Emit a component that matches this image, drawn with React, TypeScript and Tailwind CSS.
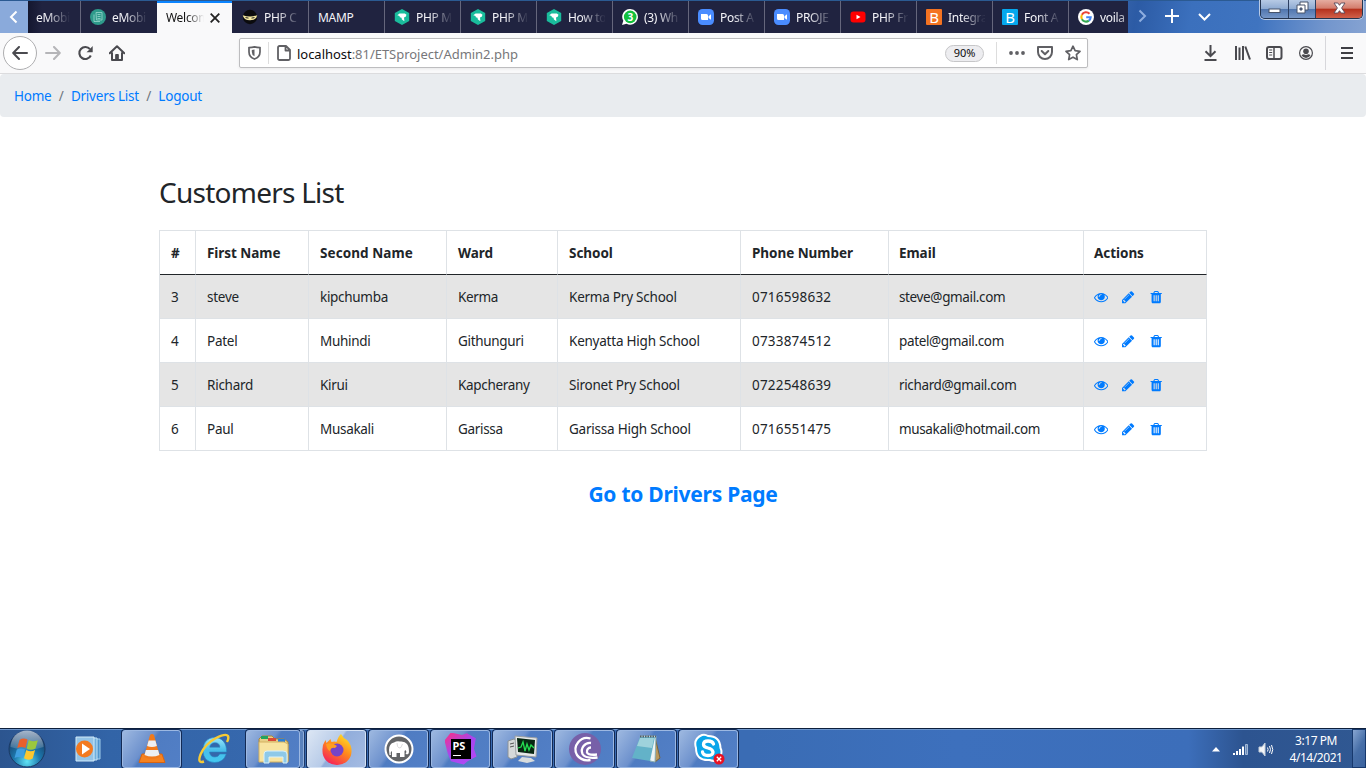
import React from "react";

const GlobeDoc = () => (
  <svg className="shrink-0" width="16" height="16" viewBox="0 0 16 16">
    <circle cx="8" cy="8" r="8" fill="#2e9a8b" />
    <path d="M6 3.500h6v7.500h-5.500zM4 5.500v7h6M7.500 5.500h3M7.500 7.500h3M7.500 9.500h3" fill="none" stroke="#8fd0c6" strokeWidth="0.900" />
  </svg>
);
const NinjaIcon = () => (
  <svg className="shrink-0" width="16" height="16" viewBox="0 0 16 16">
    <circle cx="8" cy="8" r="7.200" fill="#0b0b0d" />
    <path d="M.8 6.200Q8 8.800 15.200 6.200Q14.500 11.300 8 11.300Q1.500 11.300.8 6.200z" fill="#f3e7a0" />
    <path d="M3.500 8.600l3 .5M12.500 8.600l-3 .5" stroke="#222" strokeWidth="1" />
  </svg>
);
const HexIcon = () => (
  <svg className="shrink-0" width="16" height="16" viewBox="0 0 16 16">
    <path d="M8 0l7.200 4v8L8 16 .8 12V4z" fill="#1abc9c" />
    <path d="M3.300 6.300L5.600 4.600h5.200l1.700 1.100-.8 2.100-1.700.700.400 3.700-2.500-1.600-.4-1.800-1.700-.6-.3-1.200z" fill="#fff" />
  </svg>
);
const WhatsIcon = () => (
  <svg className="shrink-0" width="16" height="16" viewBox="0 0 16 16">
    <path d="M8.200 0a7.800 7.800 0 1 1-3.700 14.700L0 16l1.300-4.300A7.800 7.800 0 0 1 8.200 0z" fill="#fff" />
    <circle cx="8.200" cy="7.900" r="6.300" fill="#12c03d" />
    <text x="8.200" y="11.600" textAnchor="middle" fontSize="10" fontWeight="700" fill="#fff" fontFamily="Open Sans, sans-serif">3</text>
  </svg>
);
const ZoomIcon = () => (
  <svg className="shrink-0" width="16" height="16" viewBox="0 0 16 16">
    <rect width="16" height="16" rx="4.500" fill="#4a8cff" />
    <path d="M3 5h5.500a1.500 1.500 0 0 1 1.500 1.500V11H4.500A1.500 1.500 0 0 1 3 9.500zM10.500 7.200L13 5.300v5.400l-2.500-1.800z" fill="#fff" />
  </svg>
);
const YouTubeIcon = () => (
  <svg className="shrink-0" width="16" height="16" viewBox="0 0 16 16">
    <rect y="2.500" x="0.500" width="15" height="11" rx="3" fill="#f00" />
    <path d="M6.500 5.700v4.600l4-2.300z" fill="#fff" />
  </svg>
);
const GoogleIcon = () => (
  <svg className="shrink-0" width="16" height="16" viewBox="0 0 16 16">
    <circle cx="8" cy="8" r="8" fill="#fff" />
    <g fill="none" strokeWidth="2.100">
      <path d="M11.500 4.700A4.700 4.700 0 0 0 3.900 5.800" stroke="#ea4335" />
      <path d="M3.900 5.800a4.700 4.700 0 0 0 0 4.400" stroke="#fbbc05" />
      <path d="M3.900 10.200a4.700 4.700 0 0 0 7 1.400" stroke="#34a853" />
      <path d="M10.900 11.600A4.700 4.700 0 0 0 12.700 8.200H8.200" stroke="#4285f4" />
    </g>
  </svg>
);
const BOrange = () => <span className="flex h-4 w-4 shrink-0 items-center justify-center rounded-[1px] bg-[#f47321] text-[15px] leading-4 text-white">B</span>;
const BBlue = () => <span className="flex h-4 w-4 shrink-0 items-center justify-center rounded-[1px] bg-[#05a8ee] text-[15px] leading-4 text-white">B</span>;

type TabData = { label: string; icon?: React.ReactNode };
const tabs: TabData[] = [
  { label: "PHP C", icon: <NinjaIcon /> },
  { label: "MAMP" },
  { label: "PHP M", icon: <HexIcon /> },
  { label: "PHP M", icon: <HexIcon /> },
  { label: "How to", icon: <HexIcon /> },
  { label: "(3) Wh", icon: <WhatsIcon /> },
  { label: "Post A", icon: <ZoomIcon /> },
  { label: "PROJE", icon: <ZoomIcon /> },
  { label: "PHP Fr", icon: <YouTubeIcon /> },
  { label: "Integra", icon: <BOrange /> },
  { label: "Font A", icon: <BBlue /> },
];

const fade = "min-w-0 flex-1 overflow-hidden pt-px whitespace-nowrap [mask-image:linear-gradient(to_right,black_calc(100%-24px),#0001_calc(100%-2px))]";

function TabStrip() {
  return (
    <div className="flex h-[33px] shrink-0 border-t border-[#2b5a92] bg-[linear-gradient(100deg,#8aaadb_0%,#8aaadb_70%,#2c5ba5_83%,#3b70bd_87%,#3f74c0_92%,#7396cd_97%,#86a3d2_100%)] text-[12px] tracking-[-0.300px] text-[#f4f4f8]">
      <div className="flex w-7 items-center justify-center">
        <svg width="10" height="14" viewBox="0 0 10 14" fill="none" stroke="#fff" strokeWidth="2"><path d="M7.500 1.500L2 7l5.500 5.500" /></svg>
      </div>
      <div className="flex w-[53px] items-center border-r border-[#65667c] bg-[#202340] bg-[linear-gradient(90deg,#14172f,#202340_14px)] pr-2.5 pl-2">
        <span className={fade}>eMobi</span>
      </div>
      <div className="flex w-[76px] items-center gap-[6px] bg-[#202340] pr-[9px] pl-[9px]">
        <GlobeDoc />
        <span className={fade}>eMobi</span>
      </div>
      <div className="flex w-[75px] items-center border-t-2 border-[#0a84ff] bg-[#f9f9fa] pb-px pl-[9px] text-[#111]">
        <span className="w-[38px] overflow-hidden whitespace-nowrap [mask-image:linear-gradient(to_right,black_20px,transparent)]">Welcom</span>
        <svg className="ml-[6px]" width="10" height="10" viewBox="0 0 10 10" stroke="#222" strokeWidth="1.800"><path d="M.7.700l8.600 8.600M9.300.700L.7 9.300" /></svg>
      </div>
      {tabs.map((t, i) => (
        <div key={i} className={(i === 0 ? "w-[77px] pl-2.5" : "w-[76px] pl-[9px]") + " flex items-center gap-[6px] border-r border-[#65667c] bg-[#202340] pr-[7px]"}>
          {t.icon}
          <span className={t.icon ? fade : "pt-px"}>{t.label}</span>
        </div>
      ))}
      <div className="flex w-[59px] items-center gap-[6px] overflow-hidden bg-[#202340] pl-[9px]">
        <GoogleIcon />
        <span className="pt-px whitespace-nowrap [mask-image:linear-gradient(to_right,black_15px,#fff9)]">voila</span>
      </div>
      <div className="flex flex-1 items-start">
        <svg className="mt-2 ml-[10px]" width="9" height="14" viewBox="0 0 9 14" fill="none" stroke="#8eaee0" strokeWidth="2"><path d="M1.500 1.500L7 7l-5.500 5.500" /></svg>
        <svg className="mt-[7px] ml-[17px]" width="16" height="16" viewBox="0 0 16 16" stroke="#fff" strokeWidth="2"><path d="M8 1v14M1 8h14" /></svg>
        <svg className="mt-3 ml-[18px]" width="13" height="8" viewBox="0 0 13 8" fill="none" stroke="#fff" strokeWidth="2"><path d="M1 1l5.500 5.500L12 1" /></svg>
        <div className="-mt-px ml-[49px] flex h-[19px] w-[103px] overflow-hidden rounded-b-[5px] border border-t-0 border-[#24344f] shadow-[0_0_0_1px_#b8cae5]">
          <div className="flex w-7 items-center justify-center border-r border-[#2c3f62] bg-[linear-gradient(#b7cae5,#8fabd2_48%,#4f74ad_50%,#7697c8)]">
            <svg width="13" height="6" viewBox="0 0 13 6" className="mt-[3px]"><rect x="1" y="1" width="11" height="3.500" fill="#fff" stroke="#46536b" /></svg>
          </div>
          <div className="flex w-[27px] items-center justify-center border-r border-[#2c3f62] bg-[linear-gradient(#b7cae5,#8fabd2_48%,#4f74ad_50%,#7697c8)]">
            <svg width="13" height="13" viewBox="0 0 13 13" className="-mt-[3px]"><path d="M4 1h8v8H4z" fill="#fff" stroke="#46536b" /><path d="M1 4h8v8H1z" fill="#fff" stroke="#46536b" /><path d="M4 7h2v2H4z" fill="#63799d" stroke="#46536b" /></svg>
          </div>
          <div className="flex flex-1 items-center justify-center bg-[linear-gradient(#e5aca0,#d37c6c_46%,#b4301c_50%,#d0604a)]">
            <svg width="13" height="12" viewBox="0 0 13 12" className="-mt-[3px]"><path d="M1 1h3.800l1.700 2.300L8.200 1H12L8.600 6l3.400 5H8.200L6.500 8.700 4.800 11H1l3.400-5z" fill="#fff" stroke="#56485a" strokeWidth=".9" /></svg>
          </div>
        </div>
      </div>
    </div>
  );
}

function Toolbar() {
  return (
    <div className="flex h-[41px] shrink-0 items-center border-b border-[#dcdcde] bg-[#f9f9fa]">
      <div className="ml-[3px] flex h-[34px] w-[34px] shrink-0 items-center justify-center rounded-full border border-[#aeaeb0] bg-white">
        <svg width="16" height="14" viewBox="0 0 16 14" fill="none" stroke="#4a4a4f" strokeWidth="2" strokeLinecap="round" strokeLinejoin="round"><path d="M7 1L1.200 7 7 13M1.500 7H15" /></svg>
      </div>
      <svg className="ml-2" width="16" height="14" viewBox="0 0 16 14" fill="none" stroke="#b5b5b8" strokeWidth="2" strokeLinecap="round" strokeLinejoin="round"><path d="M9 1l5.800 6L9 13M14.500 7H1" /></svg>
      <svg className="ml-4" width="16" height="16" viewBox="0 0 16 16" fill="none" stroke="#4a4a4f" strokeWidth="2.100"><path d="M13.800 10.500A6 6 0 1 1 13 4.200" /><path d="M15.700 1v6.200H9.500L12 5z" fill="#4a4a4f" stroke="none" /></svg>
      <svg className="ml-4" width="16" height="16" viewBox="0 0 16 16" fill="none" stroke="#4a4a4f" strokeWidth="2" strokeLinejoin="round"><path d="M.7 8.300L8 1.200l7.300 7.100M3 8v7h10V8" strokeLinecap="round" /><path d="M6.700 15V9.500h2.600V15" fill="#4a4a4f" strokeWidth="1" /></svg>
      <div className="ml-[114px] flex h-[30px] w-[849px] shrink-0 items-center rounded-[2px] border border-[#bdbdbf] bg-white shadow-[0_1px_3px_#0001]">
        <svg className="ml-2" width="13" height="14" viewBox="0 0 13 14" fill="none" stroke="#606064" strokeWidth="1.700"><path d="M1 1.700Q4 1.500 6.500.9 9 1.500 12 1.700V6Q12 11 6.500 13 1 11 1 6z" /><path d="M6.500 3.500v6.800Q3.800 9 3.800 6V4z" fill="#606064" stroke="none" /></svg>
        <div className="ml-[7px] h-[22px] w-px bg-[#ddd]" />
        <svg className="ml-2" width="14" height="16" viewBox="0 0 14 16" fill="none" stroke="#606064" strokeWidth="1.800" strokeLinejoin="round"><path d="M1 2.500A1.500 1.500 0 0 1 2.500 1H9l4 4v8.500a1.500 1.500 0 0 1-1.500 1.500h-9A1.500 1.500 0 0 1 1 13.500zM8.500 1v4.500H13" /></svg>
        <div className="ml-[6px] w-[560px] pt-[3px] text-[13px] tracking-[-0.030px] whitespace-nowrap text-[#77777a]"><span className="text-[#0c0c0d]">localhost</span>:81/ETSproject/Admin2.php</div>
        <div className="ml-[88px] flex h-[17px] w-[39px] items-center justify-center rounded-full border border-[#c6c6c8] bg-[#ededf0] pt-px text-[11px] tracking-[-0.100px] text-[#0c0c0d]">90%</div>
        <div className="ml-3 h-[22px] w-px bg-[#ddd]" />
        <svg className="ml-3" width="16" height="4" viewBox="0 0 16 4" fill="#606064"><circle cx="2" cy="2" r="1.900" /><circle cx="8" cy="2" r="1.900" /><circle cx="14" cy="2" r="1.900" /></svg>
        <svg className="ml-3" width="16" height="14" viewBox="0 0 16 14" fill="none" stroke="#606064" strokeWidth="2" strokeLinecap="round" strokeLinejoin="round"><path d="M1 1h14v5a7 7 0 0 1-14 0zM4.700 5L8 8.200 11.300 5" /></svg>
        <svg className="ml-3" width="16" height="16" viewBox="0 0 16 16" fill="none" stroke="#606064" strokeWidth="1.700" strokeLinejoin="round"><path d="M8 1.200l2.100 4.500 4.900.6-3.600 3.400.9 4.900L8 12.200l-4.300 2.400.9-4.900L1 6.300l4.900-.6z" /></svg>
      </div>
      <svg className="ml-[115.500px]" width="13" height="16" viewBox="0 0 13 16" fill="none" stroke="#4a4a4f" strokeWidth="2"><path d="M6.500 0v11M1.500 6.200l5 5 5-5M.500 15h12" /></svg>
      <svg className="ml-[18px]" width="16" height="14" viewBox="0 0 16 14" stroke="#4a4a4f" strokeWidth="2"><path d="M1 0v14M4.500 1.500V14M8 0v14M10.300.500L15 13.500" /></svg>
      <svg className="ml-[15px]" width="17" height="14" viewBox="0 0 17 14" fill="none" stroke="#4a4a4f" strokeWidth="2"><rect x="1" y="1" width="14.500" height="12" rx="2" /><path d="M8 1v12" strokeWidth="1.500" /><path d="M3.200 4h3M3.200 6.500h3M3.200 9h3" strokeWidth="1" /></svg>
      <svg className="ml-[15.500px]" width="16" height="16" viewBox="0 0 16 16"><circle cx="8" cy="8" r="6.400" fill="none" stroke="#4a4a4f" strokeWidth="1.200" /><circle cx="8" cy="6.200" r="2.800" fill="#4a4a4f" /><path d="M3.500 10.200Q5 9 6.300 9.500q1.700.8 3.400 0 1.300-.5 2.800.7Q11 13 8 13t-4.500-2.800z" fill="#4a4a4f" /></svg>
      <div className="ml-[11px] h-[34px] w-px bg-[#d7d7db]" />
      <svg className="ml-[15px]" width="12" height="12" viewBox="0 0 12 12" stroke="#3f3f44" strokeWidth="2"><path d="M0 1h12M0 6h12M0 11h12" /></svg>
    </div>
  );
}

const ActionIcon = ({ d }: { d: string }) => (
  <svg width="14.400" height="14.400" viewBox="0 0 1792 1792" fill="#007bff"><path d={d} /></svg>
);
const eye = "M1664 960q-152-236-381-353 61 104 61 225 0 185-131.500 316.500t-316.500 131.500-316.500-131.500-131.500-316.500q0-121 61-225-229 117-381 353 133 205 333.500 326.500t434.500 121.500 434.500-121.500 333.500-326.500zm-720-384q0-20-14-34t-34-14q-125 0-214.500 89.500t-89.500 214.500q0 20 14 34t34 14 34-14 14-34q0-86 61-147t147-61q20 0 34-14t14-34zm848 384q0 34-20 69-140 230-376.500 368.500t-499.500 138.500-499.500-139-376.500-368q-20-35-20-69t20-69q140-229 376.500-368t499.500-139 499.500 139 376.500 368q20 35 20 69z";
const pencil = "M491 1536l91-91-235-235-91 91v107h128v128h107zm523-928q0-22-22-22-10 0-17 7l-542 542q-7 7-7 17 0 22 22 22 10 0 17-7l542-542q7-7 7-17zm-54-192l416 416-832 832h-416v-416zm683 96q0 53-37 90l-166 166-416-416 166-165q36-38 90-38 53 0 91 38l235 234q37 39 37 91z";
const trash = "M704 1376v-704q0-14-9-23t-23-9h-64q-14 0-23 9t-9 23v704q0 14 9 23t23 9h64q14 0 23-9t9-23zm256 0v-704q0-14-9-23t-23-9h-64q-14 0-23 9t-9 23v704q0 14 9 23t23 9h64q14 0 23-9t9-23zm256 0v-704q0-14-9-23t-23-9h-64q-14 0-23 9t-9 23v704q0 14 9 23t23 9h64q14 0 23-9t9-23zm-544-992h448l-48-117q-7-9-17-11h-317q-10 2-17 11zm928 32v64q0 14-9 23t-23 9h-96v948q0 83-47 143.500t-113 60.500h-832q-66 0-113-58.500t-47-141.500v-952h-96q-14 0-23-9t-9-23v-64q0-14 9-23t23-9h309l70-167q15-37 54-63t79-26h320q40 0 79 26t54 63l70 167h309q14 0 23 9t9 23z";

const headers = ["#", "First Name", "Second Name", "Ward", "School", "Phone Number", "Email", "Actions"];
const rows = [
  ["3", "steve", "kipchumba", "Kerma", "Kerma Pry School", "0716598632", "steve@gmail.com"],
  ["4", "Patel", "Muhindi", "Githunguri", "Kenyatta High School", "0733874512", "patel@gmail.com"],
  ["5", "Richard", "Kirui", "Kapcherany", "Sironet Pry School", "0722548639", "richard@gmail.com"],
  ["6", "Paul", "Musakali", "Garissa", "Garissa High School", "0716551475", "musakali@hotmail.com"],
];
const cellTracking = [
  "pl-[11px]",
  "pl-[11px] tracking-[-0.250px]",
  "pl-[11px] tracking-[-0.300px]",
  "pl-[11px] tracking-[-0.330px]",
  "pl-[11px] tracking-[-0.230px]",
  "pl-[11px] tracking-[0.200px]",
  "pl-2.5 tracking-[-0.360px]",
];

function Page() {
  return (
    <main className="flex min-h-0 flex-1 flex-col bg-white text-[#212529]">
      <nav className="flex h-[43px] shrink-0 items-center rounded-[4px] bg-[#e9ecef] pt-px pl-3.5 text-[13.500px] tracking-[-0.230px] text-[#007bff]">
        <a>Home</a>
        <span className="px-[7.300px] text-[#6c757d]">/</span>
        <a>Drivers List</a>
        <span className="px-[7.300px] text-[#6c757d]">/</span>
        <a>Logout</a>
      </nav>
      <div className="mx-auto mt-[58px] flex w-[1048px] flex-col">
        <h2 className="h-[55px] text-[28px] leading-[34px] font-normal tracking-[-0.750px]">Customers List</h2>
        <table className="w-[1048px] table-fixed border-separate border-spacing-0 border-t border-l border-[#dee2e6] text-[13.500px]">
          <colgroup>
            <col className="w-[36px]" /><col className="w-[113px]" /><col className="w-[138px]" /><col className="w-[111px]" />
            <col className="w-[183px]" /><col className="w-[148px]" /><col className="w-[195px]" /><col className="w-[123px]" />
          </colgroup>
          <thead>
            <tr className="h-11">
              {headers.map((h, i) => (
                <th key={h} className={(i > 5 ? "pl-2.5" : "pl-[11px]") + (i === 2 ? " tracking-[0.080px]" : " tracking-[-0.050px]") + " border-r border-b border-r-[#dee2e6] border-b-[#212529] pt-0.5 pb-0 text-left text-[13.500px] font-bold whitespace-nowrap"}>{h}</th>
              ))}
            </tr>
          </thead>
          <tbody>
            {rows.map((r, k) => (
              <tr key={k} className={k % 2 === 0 ? "h-11 bg-[#e5e5e5]" : "h-11"}>
                {r.map((c, i) => (
                  <td key={i} className={cellTracking[i] + " border-r border-b border-[#dee2e6] pt-0.5 pb-0 whitespace-nowrap"}>{c}</td>
                ))}
                <td className="border-r border-b border-[#dee2e6] pt-px pb-0 pl-[10px]">
                  <div className="flex gap-[13px]">
                    <ActionIcon d={eye} /><ActionIcon d={pencil} /><ActionIcon d={trash} />
                  </div>
                </td>
              </tr>
            ))}
          </tbody>
        </table>
        <a className="mt-[28px] self-center text-[21px] leading-[30px] font-bold tracking-[-0.260px] text-[#007bff]">Go to Drivers Page</a>
      </div>
    </main>
  );
}

const buttonFrame = "flex h-[38px] shrink-0 items-center justify-center rounded-[3px] border shadow-[0_0_0_1px_#122a55]";
const idleFill = " border-[#9cb8e2] bg-[linear-gradient(125deg,#9db8e0_0%,#6d91cd_40%,#4f7cc2_46%,#527fc6_100%)]";
const taskButton = buttonFrame + idleFill + " w-[59px]";

function Taskbar() {
  return (
    <footer className="flex h-10 shrink-0 items-center border-t border-[#0d1f3c] bg-[linear-gradient(90deg,#2c558f_0%,#3264a7_8%,#3a6cb4_30%,#3a6cb4_55%,#3d70bd_70%,#3c6eba_87%,#2d5490_91%,#305892_100%)] shadow-[inset_0_1px_0_#6f97cd]">
      <svg className="ml-2" width="38" height="38" viewBox="0 0 38 38">
        <defs>
          <radialGradient id="orb" cx=".5" cy=".85" r=".8"><stop offset="0" stopColor="#5fe3f5" /><stop offset=".45" stopColor="#1d78ad" /><stop offset="1" stopColor="#16345e" /></radialGradient>
          <linearGradient id="orbShine" x2="0" y2="1"><stop stopColor="#d5e4f3" stopOpacity=".75" /><stop offset="1" stopColor="#fff" stopOpacity=".1" /></linearGradient>
        </defs>
        <circle cx="19" cy="19" r="18" fill="url(#orb)" stroke="#1b3963" />
        <path d="M2.500 17A16.500 16.500 0 0 1 35.500 17Q20 23 2.500 17z" fill="url(#orbShine)" />
        <path d="M11.500 10q3.500-2.500 8-.5L17.500 18q-4-2-8.300 0z" fill="#e8602c" />
        <path d="M20.800 10q4.500 2.500 9 .2L27.500 18.500q-4.500 2.500-8.800 0z" fill="#9bc83e" />
        <path d="M8.800 19.400q4-2 8.300 0L15 28q-4.500-2-8.500 0z" fill="#3f9fe0" />
        <path d="M18.300 19.900q4.500 2.500 8.800.1L24.700 28.500q-4.500 2.500-8.700-.2z" fill="#fdc72e" />
      </svg>
      <svg className="ml-[29px]" width="27" height="26" viewBox="0 0 27 26">
        <path d="M8 3h17v20H8z" fill="#4f94cc" stroke="#9fcdec" /><path d="M5 2h17v22H5z" fill="#6fafdd" stroke="#c3e2f5" /><path d="M1 1h18v24H1z" fill="#94c4e7" stroke="#d2eaf8" />
        <circle cx="9.500" cy="13" r="8.500" fill="#f37a20" /><path d="M7 7.500v11l8-5.500z" fill="#fff" />
      </svg>
      <div className={taskButton + " ml-[20px]"}>
        <svg width="28" height="32" viewBox="0 0 28 32">
          <path d="M4 21h20l3 8.500H1z" fill="#f58220" stroke="#d96410" />
          <path d="M12 2q2-2 4 0l6 22q-8 4-16 0z" fill="#f07a1c" />
          <path d="M10.600 7.500h6.800l1.500 5.500q-5 2-9.800 0zM7.900 17h12.200l1.400 5q-7.500 3-15 0z" fill="#eceff3" />
        </svg>
      </div>
      <svg className="ml-[17px]" width="32" height="32" viewBox="0 0 32 32">
        <defs><linearGradient id="ie" x2="0" y2="1"><stop stopColor="#9be7fb" /><stop offset=".5" stopColor="#49bdea" /><stop offset="1" stopColor="#42c8f0" /></linearGradient></defs>
        <path fillRule="evenodd" d="M16.500 4.500C24 4.500 29 10 28.500 19H11.500Q12 24 17 24q3.500 0 4.700-3h6.500Q25.500 29.500 16.500 29.500 5 29 5 17 5.500 5 16.500 4.500zM11.700 14.200h10.200Q21.500 9.700 17 9.700t-5.300 4.500z" fill="url(#ie)" stroke="#2587c4" strokeWidth=".6" />
        <path d="M6 28.500Q-1 31 2.500 21.500 7 11 18 5 28 0 30 3q1 2.500-1 6" fill="none" stroke="#f7ca35" strokeWidth="2.400" />
      </svg>
      <div className="ml-[16px] flex">
        <div className={buttonFrame + idleFill + " w-[54px]"}>
          <svg width="34" height="30" viewBox="0 0 34 30">
            <path d="M3 5l3-3h10l3 3h9l4 3v19H4z" fill="#e8cf86" stroke="#ad8735" />
            <path d="M5 2h7v3H5z" fill="#24a45c" /><path d="M12 4h8v3h-8z" fill="#d84a37" /><path d="M22 5h7v3h-7z" fill="#2b80d5" />
            <path d="M3 8h25l4 2v18H3z" fill="#f8e4a0" stroke="#d3b060" />
            <path d="M8 29V20q0-3 3-3h16q4 0 4 3v9h-4v-6H13v6z" fill="#8ec9e8" stroke="#d9f1fb" />
          </svg>
        </div>
        <div className="h-[38px] w-1 rounded-r-[3px] border border-l-0 border-[#8faedb] bg-[#5a82bd] shadow-[1px_0_0_#1d396b]" />
      </div>
      <div className="ml-[3px] flex gap-[3px]">
        <div className={buttonFrame + " w-[59px] border-[#d5e2f4] bg-[linear-gradient(125deg,#dce6f4_0%,#b7cbe8_45%,#91addb_48%,#a4bbe2_100%)]"}>
          <svg width="32" height="32" viewBox="0 0 32 32">
            <defs><linearGradient id="fox" x1=".8" y1="0" x2=".2" y2="1"><stop stopColor="#ffe226" /><stop offset=".45" stopColor="#ff8a1c" /><stop offset="1" stopColor="#f5175f" /></linearGradient></defs>
            <path d="M20 1q2 4 6 6 5 5 4.500 12A14.500 13.500 0 0 1 1.500 18Q1 12 4.500 7l1 3 4-4 1 3q3-1 5 0 2-6 4.500-8z" fill="url(#fox)" />
            <circle cx="16" cy="17" r="6.500" fill="#7544c9" /><path d="M5 11q6-2 11 2l-2 2q-4-1-5 3-3-1-4-7z" fill="#ff9d20" />
          </svg>
        </div>
        <div className={taskButton}>
          <svg width="30" height="30" viewBox="0 0 30 30">
            <circle cx="15" cy="15" r="13.500" fill="#626467" stroke="#fff" strokeWidth="2" />
            <path d="M5 16Q5 9.500 10 8.500q3-2 6-1 5-.5 7 2.500 2 2.500 2 8 0 2-2 2.500l-1.500-1 1-1.500-1-2-1 1v6h-4.500v-4h-3.500V23H8v-6q-2 1-1 4H5.500z" fill="#fff" /><path d="M13 9q0 4 2 5t3.500-4" fill="none" stroke="#c4c5c7" strokeWidth=".6" />
          </svg>
        </div>
        <div className={taskButton}>
          <div className="flex h-8 w-8 items-center justify-center bg-[linear-gradient(145deg,#fc2e83,#a646ee_45%,#b74af7)] [clip-path:polygon(20%_0,55%_8%,70%_2%,98%_18%,92%_50%,100%_75%,72%_90%,60%_100%,20%_90%,10%_65%,0_25%)]">
            <div className="flex h-5 w-5 flex-col bg-black pl-0.5 text-[11px] leading-[13px] font-bold text-white">PS<span className="mt-[3px] h-px w-2 bg-white" /></div>
          </div>
        </div>
        <div className={taskButton}>
          <svg width="32" height="30" viewBox="0 0 32 30">
            <path d="M1 7l6-2 3 2v16l-6 2-3-2z" fill="#d6d9da" stroke="#8b9297" /><path d="M3 10l4-1M3 13l4-1" stroke="#555" />
            <path d="M8 2l22 2-1 19-20-2z" fill="#e6e8e8" stroke="#9ba0a3" /><path d="M10 4l18 2-1 14-16-2z" fill="#082713" />
            <path d="M11 14l3-1 2-5 2 9 2-7 2 6 2-5 3 3" fill="none" stroke="#25dc51" strokeWidth="1.300" /><path d="M15 23l9 1 4 3-8 2-9-2z" fill="#d8dcdd" />
          </svg>
        </div>
        <div className={taskButton}>
          <svg width="32" height="32" viewBox="0 0 32 32"><circle cx="16" cy="16" r="16" fill="#7760a8" /><g fill="none" stroke="#fff" strokeWidth="2.300"><path d="M21.500 5.500A11.500 11.500 0 0 0 8 22q4.500 6.500 13.500 5" /><path d="M22 10a8 8 0 0 0-8.500 11q3 5 15 3.500" /><path d="M22 14.500a4 4 0 0 0-4 5q1.500 3 10 2" /></g></svg>
        </div>
        <div className={taskButton}>
          <svg width="31" height="30" viewBox="0 0 31 30"><path d="M24 3l5 21-5 4z" fill="#b9985c" stroke="#77653d" /><path d="M9 2h16l-1 26-5-1z" fill="#edf4f4" stroke="#8cafb6" /><path d="M9 3h15l-5 24-18-3z" fill="#63b2c8" /><path d="M9 4h14l-2 10-15-2z" fill="#b8e0e4" opacity=".7" /><path d="M9 2.500h16" stroke="#565f65" strokeWidth="2" strokeDasharray="1.500 1" /></svg>
        </div>
        <div className={taskButton}>
          <svg width="32" height="32" viewBox="0 0 32 32">
            <path d="M9 2q3-1 6 1 12 0 12.500 12 2 4 0 8-3 7-11 4Q3 28 3 15 0 6 9 2z" fill="#0ba5e9" stroke="#fff" strokeWidth="2" />
            <path d="M20.500 11Q19.500 8 15 8t-4.500 3.500q0 2.500 4.500 3.500t5 4q0 3.500-5 3.500t-5.500-3.500" fill="none" stroke="#fff" strokeWidth="3.300" strokeLinecap="round" />
            <circle cx="26" cy="26" r="5.500" fill="#e81123" /><path d="M23.800 23.800l4.400 4.400M28.200 23.800l-4.400 4.400" stroke="#fff" strokeWidth="1.300" />
          </svg>
        </div>
      </div>
      <div className="ml-auto flex items-center text-white">
        <svg className="mt-px" width="8" height="5" viewBox="0 0 8 5"><path d="M4 0l4 4.500H0z" fill="#fff" /></svg>
        <svg className="mt-px ml-[13px]" width="16" height="13" viewBox="0 0 16 13"><path d="M0 10h2v2H0zM3 8h2v4H3zM6 6h2v6H6zM9 3.500h2V12H9z" fill="#fff" /><path d="M12.500 1.500h2v10h-2z" fill="#6e8db9" stroke="#b9cbe4" strokeWidth=".8" /></svg>
        <svg className="mt-px ml-[9px]" width="17" height="15" viewBox="0 0 17 15" fill="none" stroke="#fff"><path d="M1 5h3l3-4v13l-3-4H1z" fill="#f4f6f8" stroke="#c6cfdb" /><path d="M9.500 5.500q1.200 2 0 4M11.500 4q2 3.500 0 7M13.500 3q2.500 4.500 0 9" /></svg>
        <div className="ml-[10px] w-[62px] pt-px text-center text-[12px] leading-[17px] tracking-[-0.450px] whitespace-nowrap">3:17 PM<br />4/14/2021</div>
        <div className="ml-[5px] h-[39px] w-3.5 border border-[#17396d] bg-[linear-gradient(120deg,#87a5d1,#476fa8_50%,#3a629e)]" />
      </div>
    </footer>
  );
}

export default function App() {
  return (
    <div className="flex h-screen w-full flex-col overflow-hidden bg-white font-['Noto_Sans','Open_Sans',sans-serif]">
      <TabStrip />
      <Toolbar />
      <Page />
      <Taskbar />
    </div>
  );
}
